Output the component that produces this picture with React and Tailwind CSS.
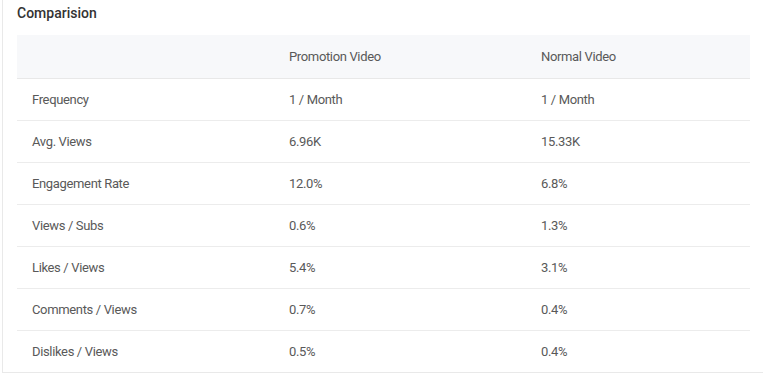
const rows = [
  ["Frequency", "1 / Month", "1 / Month"],
  ["Avg. Views", "6.96K", "15.33K"],
  ["Engagement Rate", "12.0%", "6.8%"],
  ["Views / Subs", "0.6%", "1.3%"],
  ["Likes / Views", "5.4%", "3.1%"],
  ["Comments / Views", "0.7%", "0.4%"],
  ["Dislikes / Views", "0.5%", "0.4%"],
];

export default function App() {
  return (
    <div className="w-[763px] h-[377px] bg-white pl-[2px] overflow-hidden" style={{ fontFamily: "Roboto, 'Noto Sans', sans-serif" }}>
      <div className="border-l border-b border-[#e9e9e9] pl-[14px] w-[800px]">
        <div className="h-[35px] pt-[3px] text-[14px] leading-[20px] font-medium text-[#333]">Comparision</div>
        <div className="w-[733px] text-[13px] tracking-[-0.35px] text-[#595959]">
          <div className="grid grid-cols-[257px_252px_1fr] h-[44px] items-center bg-[#f7f8fa] border-b border-[#e8e8e8]">
            <div className="px-[15px]"></div>
            <div className="px-[15px]">Promotion Video</div>
            <div className="px-[15px]">Normal Video</div>
          </div>
          {rows.map((r, i) => (
            <div
              key={r[0]}
              className={
                i < rows.length - 1
                  ? "grid grid-cols-[257px_252px_1fr] h-[42px] items-center border-b border-[#ececec]"
                  : "grid grid-cols-[257px_252px_1fr] h-[41px] items-center"
              }
            >
              <div className="px-[15px]">{r[0]}</div>
              <div className="px-[15px]">{r[1]}</div>
              <div className="px-[15px]">{r[2]}</div>
            </div>
          ))}
        </div>
      </div>
    </div>
  );
}
